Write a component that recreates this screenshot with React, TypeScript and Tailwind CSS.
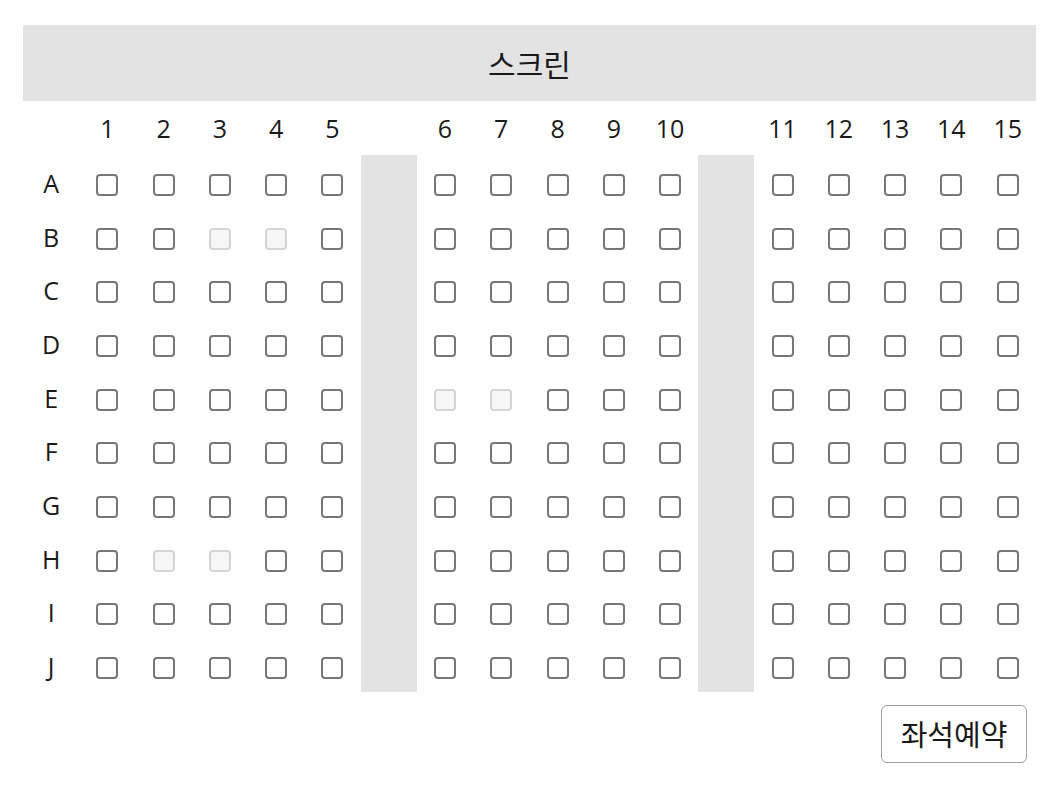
import React from "react";

const rows = ["A", "B", "C", "D", "E", "F", "G", "H", "I", "J"];
const disabled = new Set(["B3", "B4", "E6", "E7", "H2", "H3"]);
const groups = [
  [1, 2, 3, 4, 5],
  [6, 7, 8, 9, 10],
  [11, 12, 13, 14, 15],
];

function Seat({ off }: { off: boolean }) {
  return (
    <div
      className={
        off
          ? "mx-auto translate-y-[3px] w-[22px] h-[22px] rounded-[4px] border-2 border-[#d4d4d4] bg-[#f6f6f6]"
          : "mx-auto translate-y-[3px] w-[22px] h-[22px] rounded-[4px] border-2 border-[#777777] bg-white"
      }
    />
  );
}

export default function App() {
  return (
    <div
      className="bg-white w-[1057px] h-[790px] pt-[25px] pl-[23px] text-[#1a1a1a]"
      style={{ fontFamily: '"Open Sans", "Noto Sans CJK KR", sans-serif' }}
    >
      <div className="w-[1013px]">
        <div
          className="h-[76px] bg-[#e3e3e3] flex items-center justify-center text-[30px]"
          style={{ fontFamily: '"Noto Sans CJK KR", sans-serif' }}
        >
          스크린
        </div>
        <table className="w-full table-fixed border-collapse">
          <thead>
            <tr className="h-[54px] text-[25px]">
              <th className="font-normal p-0"></th>
              {groups.map((g, gi) => (
                <React.Fragment key={gi}>
                  {g.map((n) => (
                    <th key={n} className="font-normal text-center p-0 leading-[54px]">
                      {n}
                    </th>
                  ))}
                  {gi < 2 && <th className="font-normal p-0"></th>}
                </React.Fragment>
              ))}
            </tr>
          </thead>
          <tbody>
            {rows.map((r) => (
              <tr key={r} className="h-[53.7px] text-[25px]">
                <td className="text-center p-0 leading-[30px] pt-[2px]">{r}</td>
                {groups.map((g, gi) => (
                  <React.Fragment key={gi}>
                    {g.map((n) => (
                      <td key={n} className="p-0 align-middle">
                        <Seat off={disabled.has(r + n)} />
                      </td>
                    ))}
                    {gi < 2 && <td className="p-0 bg-[#e3e3e3]"></td>}
                  </React.Fragment>
                ))}
              </tr>
            ))}
          </tbody>
        </table>
        <div className="flex justify-end pr-[9px] mt-[13px]">
          <button
            className="w-[146px] h-[58px] rounded-[6px] border border-[#9e9e9e] bg-white text-[29px] text-[#1a1a1a]"
            style={{ fontFamily: '"Noto Sans CJK KR", sans-serif' }}
          >
            좌석예약
          </button>
        </div>
      </div>
    </div>
  );
}
